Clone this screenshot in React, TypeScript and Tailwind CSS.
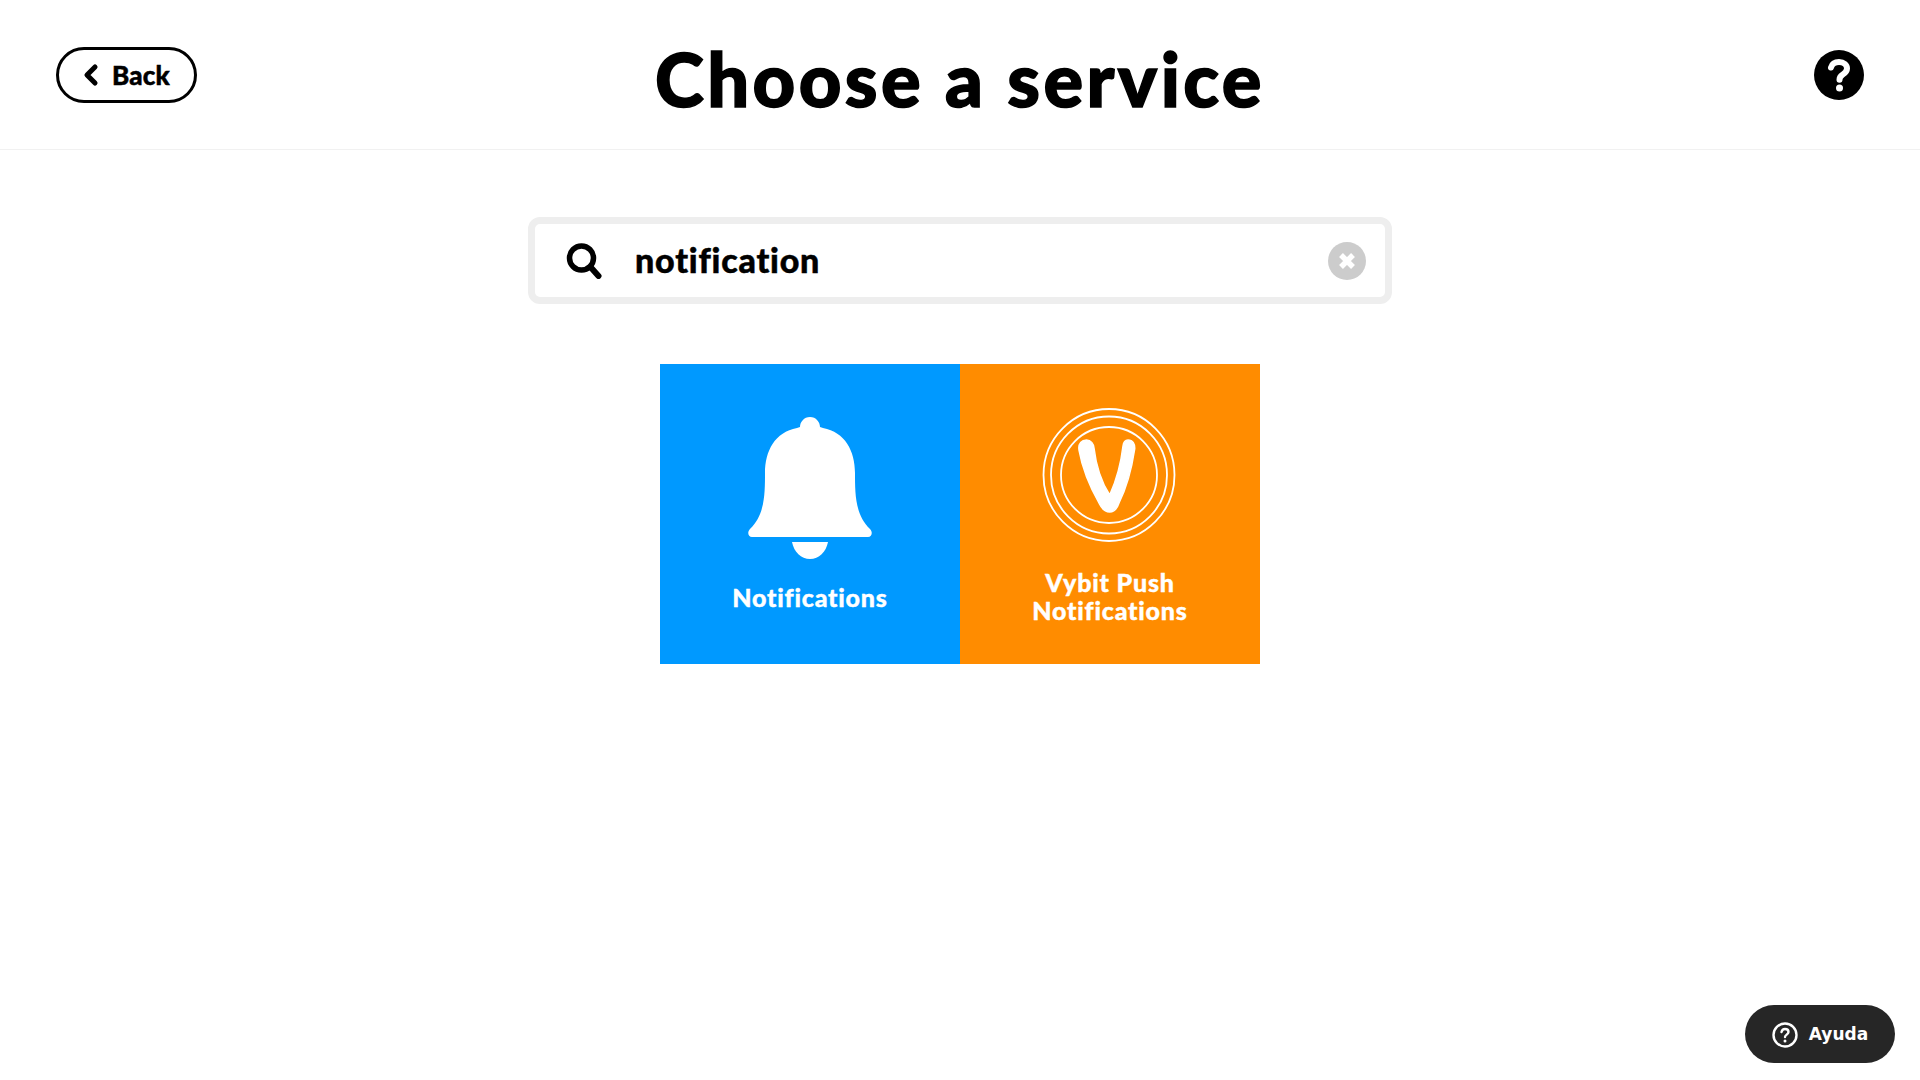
import { ChevronLeft } from "lucide-react";

const display = "font-['Lato','Liberation_Sans',sans-serif]";

interface Service {
    name: string[];
    color: string;
    iconTop: string;
    labelTop: string;
    icon: React.ReactNode;
}

function BellIcon() {
    return (
        <svg width="124" height="142" viewBox="0 0 124 142" fill="#fff">
            <path d="M62 0c-6 0-10 5-10 10-1 0-2 1-3 1C27 15 17 34 17 56c0 20 0 42-15 56-3 3-2 8 2 8h116c4 0 5-5 2-8C107 98 107 76 107 56c0-22-10-41-32-45-1 0-2-1-3-1 0-5-4-10-10-10z" />
            <path d="M44 125h36c-2 10-9 17-18 17s-16-7-18-17z" />
        </svg>
    );
}

function VybitIcon() {
    return (
        <svg width="134" height="136" viewBox="0 0 134 136" fill="none" stroke="#fff" className="-translate-x-[1px]">
            <ellipse cx="67" cy="68" rx="65.500" ry="66" strokeWidth="1.800" />
            <ellipse cx="67" cy="68" rx="58" ry="58.500" strokeWidth="1.800" />
            <ellipse cx="67" cy="68" rx="48" ry="48" strokeWidth="1.800" />
            <path
                fill="#fff"
                stroke="#fff"
                strokeWidth="1.500"
                d="M37 43C36 36 40 33 44.500 33C49 33 51.500 37 52 41C54 58 60 76 67.700 88C74 74 79 56 81 39C81.500 35 83.500 33 86 33C91 33 93 37 92.700 42C90 60 84 82 77 96C75 102 71 105 67.700 105C64 105 60 102 57.500 97C48 80 40 60 37 43Z"
            />
        </svg>
    );
}

const services: Service[] = [
    { name: ["Notifications"], color: "bg-[#0099ff]", iconTop: "pt-[53px]", labelTop: "mt-[24px]", icon: <BellIcon /> },
    { name: ["Vybit Push", "Notifications"], color: "bg-[#ff8c00]", iconTop: "pt-[43px]", labelTop: "mt-[25px]", icon: <VybitIcon /> },
];

export default function App() {
    return (
        <div className={`relative h-[1080px] overflow-hidden bg-white text-black [font-variant-ligatures:none] ${display}`}>
            <header className="grid h-[150px] grid-cols-[1fr_auto_1fr] items-start border-b border-[#f1f1f1] px-14">
                <div className="pt-[47px]">
                    <button className="flex h-[56px] w-[141px] items-center justify-center gap-[5px] rounded-full border-[3px] border-black text-[26px] font-black tracking-[0.2px] [-webkit-text-stroke:0.5px_#000]">
                        <ChevronLeft size={32} strokeWidth={3.800} className="-ml-2" />
                        Back
                    </button>
                </div>
                <h1 className="pt-[33px] text-[74px] leading-[92px] font-black tracking-[3.400px] [-webkit-text-stroke:1.500px_#000]">Choose a service</h1>
                <div className="flex justify-end pt-[50px]">
                    <svg width="50" height="50" viewBox="0 0 50 50">
                        <circle cx="25" cy="25" r="25" fill="#000" />
                        <path d="M17 17.500c1-3.500 4-5.500 8-5.500 5 0 8 3 8 6.500 0 3-2 4.700-4.500 6.200-2 1.300-3 2.800-3 5" fill="none" stroke="#fff" strokeWidth="6" strokeLinecap="round" />
                        <circle cx="25.500" cy="38" r="3.500" fill="#fff" />
                    </svg>
                </div>
            </header>

            <main className="flex flex-col items-center">
                <div className="mt-[67px] flex h-[87px] w-[864px] items-center rounded-xl border-[7px] border-[#eeeeee] pr-[19px] pl-[31px]">
                    <svg width="36" height="36" viewBox="0 0 36 36" fill="none" stroke="#000" className="shrink-0">
                        <circle cx="15.500" cy="15" r="12" strokeWidth="5.500" />
                        <path d="M24.500 24l8 9" strokeWidth="6" strokeLinecap="round" />
                    </svg>
                    <span className="ml-[33px] flex-1 -translate-y-[1px] text-[34px] font-black tracking-[0.800px] [-webkit-text-stroke:0.500px_#000]">notification</span>
                    <svg width="38" height="38" viewBox="0 0 38 38" className="shrink-0">
                        <circle cx="19" cy="19" r="19" fill="#cccccc" />
                        <path d="M13 13l12 12M25 13L13 25" stroke="#fff" strokeWidth="5.500" />
                    </svg>
                </div>

                <div className="mt-[60px] flex">
                    {services.map((service) => (
                        <div key={service.name.join(" ")} className={`flex h-[300px] w-[300px] flex-col items-center text-white ${service.color} ${service.iconTop}`}>
                            {service.icon}
                            <div className={`text-center text-[25px] leading-[28px] font-black tracking-[0.800px] [-webkit-text-stroke:0.400px_#fff] ${service.labelTop}`}>
                                {service.name.map((line) => (
                                    <div key={line}>{line}</div>
                                ))}
                            </div>
                        </div>
                    ))}
                </div>
            </main>

            <button className="absolute right-[25px] bottom-[17px] flex h-[58px] w-[150px] items-center justify-center gap-[11px] rounded-full bg-[#262626] pt-[1px] font-['DejaVu_Sans',sans-serif] text-[17px] font-bold text-white">
                <svg width="26" height="26" viewBox="0 0 26 26" fill="none" stroke="#fff">
                    <circle cx="13" cy="13" r="11.500" strokeWidth="2.400" />
                    <path d="M9.500 10c.5-2 2-3 3.500-3 2 0 3.500 1.300 3.500 3 0 2.500-3.500 2.700-3.500 5" strokeWidth="2.400" strokeLinecap="round" />
                    <circle cx="13" cy="19" r="1.500" fill="#fff" stroke="none" />
                </svg>
                Ayuda
            </button>
        </div>
    );
}
